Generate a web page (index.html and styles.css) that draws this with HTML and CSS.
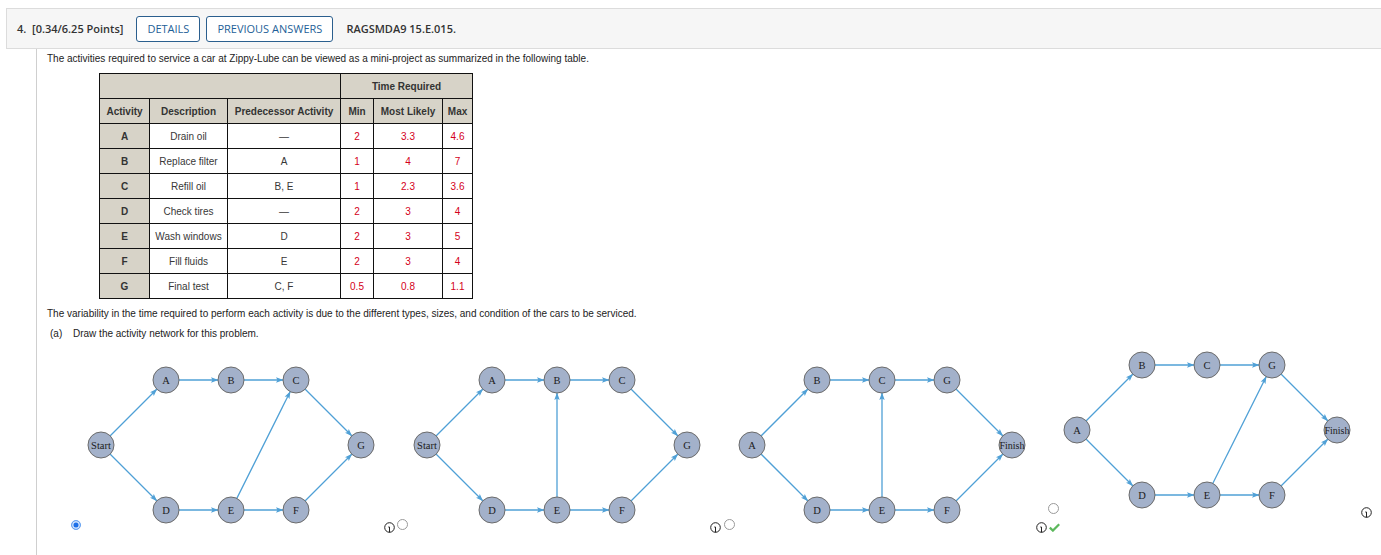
FILE: index.html
```html
<!DOCTYPE html>
<html>
<head>
<meta charset="utf-8">
<link rel="stylesheet" href="styles.css">
</head>
<body>
<svg class="defs" width="0" height="0">
  <defs>
    <marker id="arr" markerUnits="userSpaceOnUse" markerWidth="8" markerHeight="6" refX="20" refY="3" orient="auto">
      <path d="M0,0.3 L7.5,3 L0,5.7 L1.5,3 z" fill="#4fa0d6"/>
    </marker>
  </defs>
</svg>
<div class="qhead">
  <span class="qnum">4.&nbsp; [0.34/6.25 Points]</span>
  <span class="btn first">DETAILS</span>
  <span class="btn">PREVIOUS ANSWERS</span>
  <span class="qcode">RAGSMDA9 15.E.015.</span>
</div>
<div class="qbody">
  <p class="intro">The activities required to service a car at Zippy-Lube can be viewed as a mini-project as summarized in the following table.</p>
  <table class="acts">
    <colgroup><col class="c1"><col class="c2"><col class="c3"><col class="c4"><col class="c5"><col class="c6"></colgroup>
    <tr class="hd"><th colspan="3"></th><th colspan="3">Time Required</th></tr>
    <tr class="hd"><th>Activity</th><th>Description</th><th>Predecessor Activity</th><th>Min</th><th>Most Likely</th><th>Max</th></tr>
    <tr><th>A</th><td>Drain oil</td><td>—</td><td class="n">2</td><td class="n">3.3</td><td class="n">4.6</td></tr>
    <tr><th>B</th><td>Replace filter</td><td>A</td><td class="n">1</td><td class="n">4</td><td class="n">7</td></tr>
    <tr><th>C</th><td>Refill oil</td><td>B, E</td><td class="n">1</td><td class="n">2.3</td><td class="n">3.6</td></tr>
    <tr><th>D</th><td>Check tires</td><td>—</td><td class="n">2</td><td class="n">3</td><td class="n">4</td></tr>
    <tr><th>E</th><td>Wash windows</td><td>D</td><td class="n">2</td><td class="n">3</td><td class="n">5</td></tr>
    <tr><th>F</th><td>Fill fluids</td><td>E</td><td class="n">2</td><td class="n">3</td><td class="n">4</td></tr>
    <tr><th>G</th><td>Final test</td><td>C, F</td><td class="n">0.5</td><td class="n">0.8</td><td class="n">1.1</td></tr>
  </table>
  <p class="p2">The variability in the time required to perform each activity is due to the different types, sizes, and condition of the cars to be serviced.</p>
  <p class="part"><span class="plbl">(a)</span>Draw the activity network for this problem.</p>

  <div class="options">
    <span class="radio on r1"></span>
    <svg class="net n1" width="294" height="166" viewBox="0 0 294 166">
      <g class="edges">
        <line x1="17" y1="85" x2="82" y2="20"/>
        <line x1="17" y1="85" x2="82" y2="150"/>
        <line x1="82" y1="20" x2="147" y2="20"/>
        <line x1="147" y1="20" x2="212" y2="20"/>
        <line x1="212" y1="20" x2="277" y2="85"/>
        <line x1="82" y1="150" x2="147" y2="150"/>
        <line x1="147" y1="150" x2="212" y2="150"/>
        <line x1="212" y1="150" x2="277" y2="85"/>
        <line x1="147" y1="150" x2="212" y2="20"/>
      </g>
      <g class="nodes">
        <circle cx="17" cy="85" r="13"/><circle cx="82" cy="20" r="13"/><circle cx="147" cy="20" r="13"/><circle cx="212" cy="20" r="13"/>
        <circle cx="277" cy="85" r="13"/><circle cx="82" cy="150" r="13"/><circle cx="147" cy="150" r="13"/><circle cx="212" cy="150" r="13"/>
      </g>
      <g class="labels">
        <text x="17" y="85">Start</text><text x="82" y="20">A</text><text x="147" y="20">B</text><text x="212" y="20">C</text>
        <text x="277" y="85">G</text><text x="82" y="150">D</text><text x="147" y="150">E</text><text x="212" y="150">F</text>
      </g>
    </svg>
    <svg class="info i1" width="11" height="11" viewBox="0 0 11 11"><circle cx="5.5" cy="5.5" r="4.8"/><path d="M4.3,5 L5.5,5 L5.5,10.4"/></svg>
    <span class="radio r2"></span>
    <svg class="net n2" width="294" height="166" viewBox="0 0 294 166">
      <g class="edges">
        <line x1="17" y1="85" x2="82" y2="20"/>
        <line x1="17" y1="85" x2="82" y2="150"/>
        <line x1="82" y1="20" x2="147" y2="20"/>
        <line x1="147" y1="20" x2="212" y2="20"/>
        <line x1="212" y1="20" x2="277" y2="85"/>
        <line x1="82" y1="150" x2="147" y2="150"/>
        <line x1="147" y1="150" x2="212" y2="150"/>
        <line x1="212" y1="150" x2="277" y2="85"/>
        <line x1="147" y1="150" x2="147" y2="20"/>
      </g>
      <g class="nodes">
        <circle cx="17" cy="85" r="13"/><circle cx="82" cy="20" r="13"/><circle cx="147" cy="20" r="13"/><circle cx="212" cy="20" r="13"/>
        <circle cx="277" cy="85" r="13"/><circle cx="82" cy="150" r="13"/><circle cx="147" cy="150" r="13"/><circle cx="212" cy="150" r="13"/>
      </g>
      <g class="labels">
        <text x="17" y="85">Start</text><text x="82" y="20">A</text><text x="147" y="20">B</text><text x="212" y="20">C</text>
        <text x="277" y="85">G</text><text x="82" y="150">D</text><text x="147" y="150">E</text><text x="212" y="150">F</text>
      </g>
    </svg>
    <svg class="info i2" width="11" height="11" viewBox="0 0 11 11"><circle cx="5.5" cy="5.5" r="4.8"/><path d="M4.3,5 L5.5,5 L5.5,10.4"/></svg>
    <span class="radio r3"></span>
    <svg class="net n3" width="294" height="166" viewBox="0 0 294 166">
      <g class="edges">
        <line x1="17" y1="85" x2="82" y2="20"/>
        <line x1="17" y1="85" x2="82" y2="150"/>
        <line x1="82" y1="20" x2="147" y2="20"/>
        <line x1="147" y1="20" x2="212" y2="20"/>
        <line x1="212" y1="20" x2="277" y2="85"/>
        <line x1="82" y1="150" x2="147" y2="150"/>
        <line x1="147" y1="150" x2="212" y2="150"/>
        <line x1="212" y1="150" x2="277" y2="85"/>
        <line x1="147" y1="150" x2="147" y2="20"/>
      </g>
      <g class="nodes">
        <circle cx="17" cy="85" r="13"/><circle cx="82" cy="20" r="13"/><circle cx="147" cy="20" r="13"/><circle cx="212" cy="20" r="13"/>
        <circle cx="277" cy="85" r="13"/><circle cx="82" cy="150" r="13"/><circle cx="147" cy="150" r="13"/><circle cx="212" cy="150" r="13"/>
      </g>
      <g class="labels">
        <text x="17" y="85">A</text><text x="82" y="20">B</text><text x="147" y="20">C</text><text x="212" y="20">G</text>
        <text class="fin" x="277" y="85">Finish</text><text x="82" y="150">D</text><text x="147" y="150">E</text><text x="212" y="150">F</text>
      </g>
    </svg>
    <div class="fbcol">
      <span class="radio r4"></span>
      <div class="fbrow">
        <svg class="info" width="11" height="11" viewBox="0 0 11 11"><circle cx="5.5" cy="5.5" r="4.8"/><path d="M4.3,5 L5.5,5 L5.5,10.4"/></svg>
        <svg class="check" width="11" height="9" viewBox="0 0 11 9"><path d="M0.8,4.6 L3.9,7.6 L10.2,1.2" /></svg>
      </div>
    </div>
    <svg class="net n4" width="294" height="166" viewBox="0 0 294 166">
      <g class="edges">
        <line x1="17" y1="85" x2="82" y2="20"/>
        <line x1="17" y1="85" x2="82" y2="150"/>
        <line x1="82" y1="20" x2="147" y2="20"/>
        <line x1="147" y1="20" x2="212" y2="20"/>
        <line x1="212" y1="20" x2="277" y2="85"/>
        <line x1="82" y1="150" x2="147" y2="150"/>
        <line x1="147" y1="150" x2="212" y2="150"/>
        <line x1="212" y1="150" x2="277" y2="85"/>
        <line x1="147" y1="150" x2="212" y2="20"/>
      </g>
      <g class="nodes">
        <circle cx="17" cy="85" r="13"/><circle cx="82" cy="20" r="13"/><circle cx="147" cy="20" r="13"/><circle cx="212" cy="20" r="13"/>
        <circle cx="277" cy="85" r="13"/><circle cx="82" cy="150" r="13"/><circle cx="147" cy="150" r="13"/><circle cx="212" cy="150" r="13"/>
      </g>
      <g class="labels">
        <text x="17" y="85">A</text><text x="82" y="20">B</text><text x="147" y="20">C</text><text x="212" y="20">G</text>
        <text class="fin" x="277" y="85">Finish</text><text x="82" y="150">D</text><text x="147" y="150">E</text><text x="212" y="150">F</text>
      </g>
    </svg>
    <svg class="info i4" width="11" height="11" viewBox="0 0 11 11"><circle cx="5.5" cy="5.5" r="4.8"/><path d="M4.3,5 L5.5,5 L5.5,10.4"/></svg>
  </div>
</div>
</body>
</html>
```

FILE: styles.css
```css
html, body {
  margin: 0;
  padding: 0;
  background: #fff;
}
body {
  font-family: "Liberation Sans", Arial, sans-serif;
  color: #222;
  overflow: hidden;
}
.defs {
  position: absolute;
  width: 0;
  height: 0;
}

/* header bar */
.qhead {
  display: flex;
  align-items: center;
  height: 39px;
  margin: 8px 0 0 6px;
  border: 1px solid #dcdcdc;
  border-right: 0;
  background: #f6f6f6;
  padding-left: 10px;
  font-family: "Open Sans", "Liberation Sans", sans-serif;
  font-size: 11px;
  font-weight: 600;
  color: #333;
}
.btn {
  display: flex;
  align-items: center;
  height: 24px;
  padding: 0 10px;
  margin-left: 6px;
  border: 1px solid #2b5f8e;
  border-radius: 3px;
  background: #fff;
  color: #1e5f98;
  font-weight: 400;
}
.btn.first {
  margin-left: 13px;
}
.qcode {
  margin-left: 13px;
}

/* body */
.qbody {
  margin-left: 36px;
  border-left: 1px solid #cfcfcf;
  padding-left: 10px;
  padding-bottom: 40px;
  font-size: 10px;
  color: #222;
}
.qbody p {
  margin: 0;
  line-height: 14px;
}
.intro {
  padding-top: 3px;
}

/* table */
.acts {
  margin: 7px 0 0 52px;
  border-collapse: collapse;
  table-layout: fixed;
  width: 373px;
  font-size: 10px;
}
.c1 { width: 50px; }
.c2 { width: 78px; }
.c3 { width: 113px; }
.c4 { width: 33px; }
.c5 { width: 69px; }
.c6 { width: 30px; }
.acts th, .acts td {
  border: 1px solid #111;
  height: 24px;
  padding: 0;
  text-align: center;
  vertical-align: middle;
}
.acts th {
  background: #d7d3c8;
  font-weight: bold;
  color: #333;
}
.acts td {
  background: #fff;
  color: #383838;
}
.acts td.n {
  color: #d4001a;
}

.p2 {
  margin-top: 8px !important;
}
.part {
  margin-top: 6px !important;
  padding-left: 3px;
}
.plbl {
  display: inline-block;
  width: 23px;
}

/* answer options */
.options {
  display: flex;
  align-items: flex-end;
  margin-top: 4px;
}
.radio {
  display: block;
  flex: none;
  width: 9px;
  height: 9px;
  border: 1px solid #9a9a9a;
  border-radius: 50%;
  background: #fff;
  margin-bottom: 3px;
}
.radio.on {
  width: 8px;
  height: 8px;
  border: 1px solid #6aa5f2;
  background: #1c6fe8;
  box-shadow: inset 0 0 0 1.5px #cfe2fc;
}
.r1 { margin-left: 24px; }
.r2 { margin-left: 2px; }
.r3 { margin-left: 3px; }
.r4 { margin: 0 0 8px 12px; }

.net {
  display: block;
  flex: none;
  margin-bottom: 7px;
}
.n1 { margin-left: 3px; }
.n2 { margin-left: 2px; }
.n3 { margin-left: 0; }
.n4 { margin-left: 0; margin-bottom: 22px; }

.net line {
  stroke: #4fa0d6;
  stroke-width: 1.3;
  marker-end: url(#arr);
}
.net circle {
  fill: #a3b1ca;
  stroke: #6b6b6b;
  stroke-width: 1;
}
.net text {
  font-family: "Liberation Serif", "Times New Roman", serif;
  font-size: 10.5px;
  fill: #1b1b1b;
  text-anchor: middle;
  dominant-baseline: central;
}
.net text.fin {
  font-size: 10px;
}

.info {
  display: block;
  flex: none;
}
.info circle {
  fill: #fff;
  stroke: #222;
  stroke-width: 1;
}
.info path {
  fill: none;
  stroke: #222;
  stroke-width: 1;
}
.i1 { margin-left: 6px; }
.i2 { margin-left: 6px; }
.i4 { margin-left: 7px; margin-bottom: 15px; }

.fbcol {
  display: flex;
  flex-direction: column;
  margin-left: 7px;
  flex: none;
}
.fbrow {
  display: flex;
  align-items: center;
}
.check {
  display: block;
  margin-left: 2px;
}
.check path {
  fill: none;
  stroke: #5cb85c;
  stroke-width: 2.2;
}
```
